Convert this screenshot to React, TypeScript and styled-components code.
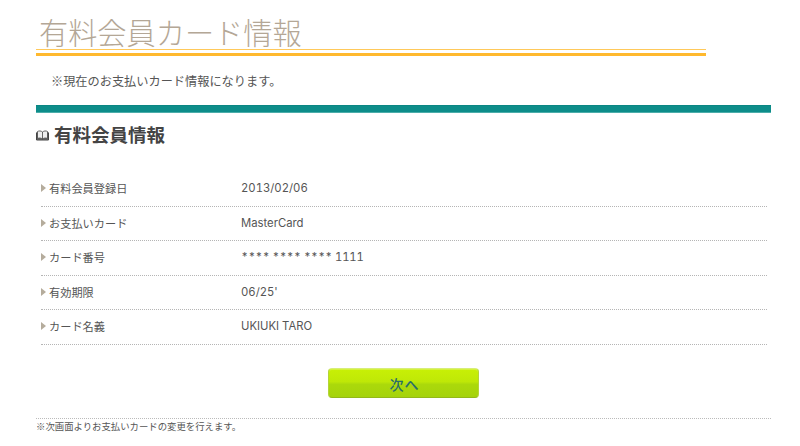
import React from "react";
import styled, { createGlobalStyle } from "styled-components";

const Global = createGlobalStyle`
  html, body { margin: 0; padding: 0; background: #fff; }
  body { font-family: "Noto Sans CJK JP", "Noto Sans", sans-serif; color: #444; }
`;

const Page = styled.div`
  width: 800px;
  height: 446px;
  overflow: hidden;
  box-sizing: border-box;
  padding: 13px 29px 0 36px;
`;

const TitleBlock = styled.div`
  width: 670px;
  height: 43px;
  box-sizing: border-box;
  border-bottom: 3px solid #ffb92e;
`;

const Title = styled.h1`
  margin: 0;
  padding-left: 3px;
  font-size: 29.2px;
  line-height: 36px;
  font-weight: 300;
  color: #b4a796;
  height: 36px;
  border-bottom: 1px solid #ffc95a;
`;

const Note = styled.p`
  margin: 0;
  padding: 15px 0 0 15px;
  font-size: 12.2px;
  line-height: 20px;
  height: 34px;
  color: #555;
`;

const SectionBar = styled.div`
  height: 8px;
  background: #0d8d8a;
  border-top: 1px solid #0a8683;
  border-bottom: 1px solid #4cadaa;
  box-sizing: border-box;
`;

const SectionHeading = styled.h2`
  margin: 10px 0 0;
  display: flex;
  align-items: center;
  gap: 5px;
  font-size: 18.5px;
  line-height: 22px;
  font-weight: 700;
  color: #444;
`;

const InfoList = styled.dl`
  margin: 27px 4px 0 5px;
  padding: 0;
`;

const InfoRow = styled.div`
  display: flex;
  align-items: center;
  height: 34.5px;
  box-sizing: border-box;
  padding-bottom: 1px;
  border-bottom: 1px dotted #b5b5b5;
  font-size: 11.2px;
`;

const Label = styled.dt`
  width: 200px;
  display: flex;
  align-items: center;
  gap: 3px;
  color: #555;
`;

const Marker = styled.span`
  width: 0;
  height: 0;
  border-left: 5px solid #b5ac9c;
  border-top: 4.5px solid transparent;
  border-bottom: 4.5px solid transparent;
`;

const Value = styled.dd<{ $masked?: boolean }>`
  margin: 0;
  font-family: "Inter", "Noto Sans CJK JP", sans-serif;
  font-size: 11.3px;
  font-variant-numeric: tabular-nums;
  letter-spacing: ${(p) => (p.$masked ? "-0.2px" : "0")};
  color: #555;
`;

const ButtonRow = styled.div`
  display: flex;
  justify-content: center;
  margin-top: 23px;
  padding-right: 1px;
`;

const NextButton = styled.button`
  width: 151px;
  height: 30px;
  padding: 0 0 0 3px;
  border: 1px solid #b4d438;
  border-top-color: #d8ee78;
  border-bottom-color: #93b81a;
  border-radius: 4px;
  box-shadow: inset 0 1px 0 #d4f23c;
  background: linear-gradient(#c8f005 0%, #bfe807 45%, #abd90b 55%, #a5d30c 100%);
  color: #2a6e6a;
  font-family: "Noto Sans CJK JP", sans-serif;
  font-size: 14px;
  font-weight: 500;
  line-height: 30px;
  letter-spacing: 1px;
`;

const Footnote = styled.p`
  margin: 20px 0 0;
  border-top: 1px dotted #bbb;
  font-size: 9.4px;
  line-height: 14px;
  color: #555;
`;

const BookIcon = () => (
  <svg width="13" height="11" viewBox="0 0 13 11" style={{ marginTop: 3 }}>
    <path d="M0.5 2.5V10H12.5V2.5" fill="#777" stroke="#444" />
    <path d="M1.5 1.5C3 .7 5 .7 6.5 2C8 .7 10 .7 11.5 1.5V8.5C10 7.8 8 7.8 6.5 9C5 7.8 3 7.8 1.5 8.5Z" fill="#eee" stroke="#444" strokeWidth="0.8" />
    <path d="M6.5 2V9" stroke="#444" strokeWidth="0.8" />
  </svg>
);

const rows = [
  { label: "有料会員登録日", value: "2013/02/06" },
  { label: "お支払いカード", value: "MasterCard" },
  { label: "カード番号", value: "**** **** **** 1111", masked: true },
  { label: "有効期限", value: "06/25'" },
  { label: "カード名義", value: "UKIUKI TARO" },
];

export default function App() {
  return (
    <Page>
      <Global />
      <TitleBlock>
        <Title>有料会員カード情報</Title>
      </TitleBlock>
      <Note>※現在のお支払いカード情報になります。</Note>
      <SectionBar />
      <SectionHeading>
        <BookIcon />
        有料会員情報
      </SectionHeading>
      <InfoList>
        {rows.map((row) => (
          <InfoRow key={row.label}>
            <Label>
              <Marker />
              {row.label}
            </Label>
            <Value $masked={row.masked}>{row.value}</Value>
          </InfoRow>
        ))}
      </InfoList>
      <ButtonRow>
        <NextButton>次へ</NextButton>
      </ButtonRow>
      <Footnote>※次画面よりお支払いカードの変更を行えます。</Footnote>
    </Page>
  );
}
